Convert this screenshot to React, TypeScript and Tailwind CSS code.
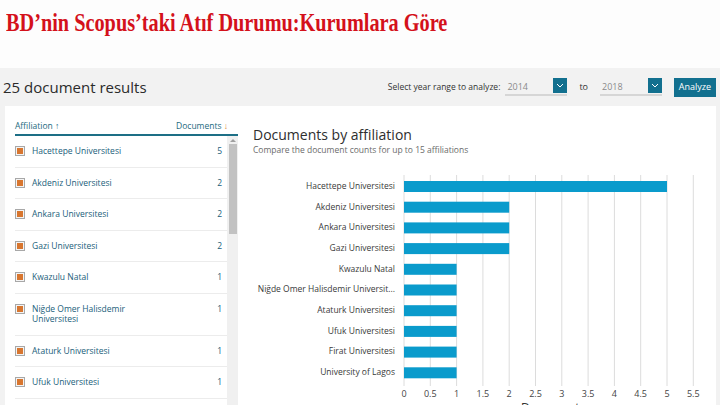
const affiliations = [
  { name: "Hacettepe Universitesi", count: 5 },
  { name: "Akdeniz Universitesi", count: 2 },
  { name: "Ankara Universitesi", count: 2 },
  { name: "Gazi Universitesi", count: 2 },
  { name: "Kwazulu Natal", count: 1 },
  { name: "Niğde Omer Halisdemir Universitesi", count: 1 },
  { name: "Ataturk Universitesi", count: 1 },
  { name: "Ufuk Universitesi", count: 1 },
];

const chartRows = [
  { label: "Hacettepe Universitesi", value: 5 },
  { label: "Akdeniz Universitesi", value: 2 },
  { label: "Ankara Universitesi", value: 2 },
  { label: "Gazi Universitesi", value: 2 },
  { label: "Kwazulu Natal", value: 1 },
  { label: "Niğde Omer Halisdemir Universit...", value: 1 },
  { label: "Ataturk Universitesi", value: 1 },
  { label: "Ufuk Universitesi", value: 1 },
  { label: "Firat Universitesi", value: 1 },
  { label: "University of Lagos", value: 1 },
];

const ticks = [0, 0.5, 1, 1.5, 2, 2.5, 3, 3.5, 4, 4.5, 5, 5.5];
const UNIT = 52.6;
const ROW = 20.7;

function YearSelect({ year }: { year: string }) {
  return (
    <div className="flex items-start w-[62px] h-[18px] border-b-2 border-[#d6d6d6]">
      <span className="flex-1 pl-[2px] pt-[2px] text-[9px] text-[#8a8a8a]">{year}</span>
      <div className="w-[14px] h-[15px] bg-[#12708f] flex items-center justify-center">
        <svg width="8" height="5" viewBox="0 0 8 5">
          <path d="M1 1 L4 4 L7 1" fill="none" stroke="#fff" strokeWidth="1" />
        </svg>
      </div>
    </div>
  );
}

function AffiliationList() {
  return (
    <div className="w-[235px] ml-[5px] bg-white flex flex-col">
      <div className="ml-[10px] h-[30px] shrink-0 border-b-2 border-[#1d6f86] flex items-end justify-between pb-[1px] pr-[10px] text-[8.5px] text-[#1d6a80]">
        <span>
          Affiliation <span className="text-[#1d6a80]">↑</span>
        </span>
        <span>
          Documents <span className="text-[#d9812f]">↓</span>
        </span>
      </div>
      <div className="flex flex-1">
        <div className="flex-1 pl-[10px]">
          {affiliations.map((a) => (
            <div key={a.name} className="flex items-start py-[10px] border-b border-[#ececec] text-[8.5px] leading-[10.5px]">
              <div className="w-[10px] h-[10px] border border-[#a8a8a8] p-[1px] bg-[#f4f4f4]">
                <div className="w-full h-full bg-[#d8762f]" />
              </div>
              <span className="w-[110px] pl-[7px] text-[#21607a]">{a.name}</span>
              <span className="ml-auto pr-[5px] text-[#21607a]">{a.count}</span>
            </div>
          ))}
        </div>
        <div className="w-[11px] bg-[#f0f0f0] flex flex-col items-center">
          <div className="h-[8px] flex items-center">
            <svg width="6" height="4" viewBox="0 0 6 4">
              <path d="M0 4 L3 1 L6 4" fill="#a0a0a0" />
            </svg>
          </div>
          <div className="w-[8px] h-[90px] bg-[#c2c2c2]" />
        </div>
      </div>
    </div>
  );
}

function AffiliationChart() {
  const plotH = chartRows.length * ROW + 8;
  return (
    <div className="flex-1 bg-white flex flex-col pl-[15px]">
      <div className="pt-[20px] text-[14px] leading-[18px] text-[#2e2e2e]">Documents by affiliation</div>
      <div className="text-[8.5px] leading-[12px] text-[#6b6b6b]">Compare the document counts for up to 15 affiliations</div>
      <div className="flex mt-[15px]">
        <div className="w-[142px] flex flex-col pt-[5px]">
          {chartRows.map((r) => (
            <div key={r.label} className="h-[20.7px] flex items-center justify-end text-[8.5px] text-[#3a3a3a] whitespace-nowrap">
              {r.label}
            </div>
          ))}
        </div>
        <svg width="318" height={plotH + 16} className="ml-[3px]">
          {ticks.map((t) => (
            <line key={t} x1={6 + t * UNIT} x2={6 + t * UNIT} y1={4} y2={plotH} stroke="#dcdcdc" strokeWidth="1" />
          ))}
          {chartRows.map((r, i) => (
            <rect key={r.label} x={6} y={10 + i * ROW} width={r.value * UNIT} height={11} fill="#0a9bcc" />
          ))}
          {ticks.map((t) => (
            <text key={t} x={6 + t * UNIT} y={plotH + 11} textAnchor="middle" fontSize="9" fill="#444" fontFamily="Open Sans, sans-serif">
              {t}
            </text>
          ))}
        </svg>
      </div>
      <div className="pl-[268px] text-[12px] leading-[12px] text-[#333]">Documents</div>
    </div>
  );
}

export default function App() {
  return (
    <div className="w-[720px] h-[405px] overflow-hidden flex flex-col bg-[#fdfdfd] font-['Open_Sans',sans-serif]">
      <div className="h-[68px] shrink-0 pl-[6px] pt-[8px]">
        <h1 className="origin-left scale-x-[0.78] whitespace-nowrap text-[26px] leading-[30px] font-bold text-[#d4111b] font-['Liberation_Serif',serif]">
          BD’nin Scopus’taki Atıf Durumu:Kurumlara Göre
        </h1>
      </div>
      <div className="flex-1 min-h-0 overflow-hidden bg-[#f2f2f2] flex flex-col">
        <div className="h-[38px] shrink-0 flex items-center">
          <div className="pl-[3px] text-[15px] text-[#2b2b2b]">25 document results</div>
          <div className="ml-auto flex items-center pr-[4px]">
            <span className="text-[8.5px] text-[#333] mr-[5px]">Select year range to analyze:</span>
            <YearSelect year="2014" />
            <span className="text-[9px] text-[#333] mx-[12px]">to</span>
            <YearSelect year="2018" />
            <button className="ml-[12px] w-[42px] h-[19px] bg-[#12708f] text-white text-[9px]">Analyze</button>
          </div>
        </div>
        <div className="flex flex-1 pr-[4px]">
          <AffiliationList />
          <AffiliationChart />
        </div>
      </div>
    </div>
  );
}
